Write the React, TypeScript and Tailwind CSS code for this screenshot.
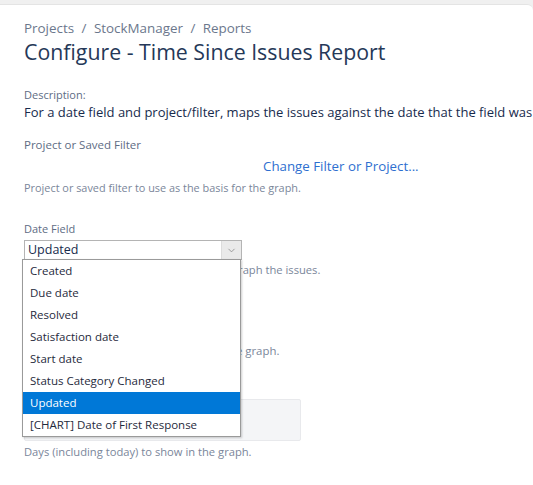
import { ChevronDown } from 'lucide-react';

const dateFields = [
  'Created',
  'Due date',
  'Resolved',
  'Satisfaction date',
  'Start date',
  'Status Category Changed',
  'Updated',
  '[CHART] Date of First Response',
];

export default function App() {
  const selected = 'Updated';

  return (
    <div className="h-[485px] w-[533px] overflow-hidden bg-[#f0f0f0] pt-[4px] font-['Open_Sans',sans-serif]">
      <div className="h-full rounded-tr-[6px] border-t border-[#e4e4e4] bg-white pl-[24px] pt-[14px]">
        {/* Header */}
        <div className="whitespace-nowrap text-[13.4px] leading-[18px] text-[#6b778c]">
          Projects <span className="mx-[4px]">/</span> StockManager <span className="mx-[4px]">/</span> Reports
        </div>
        <h1 className="mt-[1px] whitespace-nowrap text-[21.3px] leading-[28px] text-[#253858]">
          Configure - Time Since Issues Report
        </h1>

        <div className="mt-[22px] text-[11px] leading-[14px] text-[#5e6c84]">Description:</div>
        <p className="mt-[2px] whitespace-nowrap text-[13px] leading-[16px] text-[#172b4d]">
          For a date field and project/filter, maps the issues against the date that the field was set.
        </p>

        {/* Project or Saved Filter */}
        <div className="mt-[18px] text-[11.5px] leading-[14px] text-[#5e6c84]">Project or Saved Filter</div>
        <div className="mt-[5px] pl-[239px] text-[13.3px] leading-[18px] text-[#2e6fd0]">
          Change Filter or Project...
        </div>
        <div className="mt-[6px] whitespace-nowrap text-[10.9px] leading-[14px] text-[#7a869a]">
          Project or saved filter to use as the basis for the graph.
        </div>

        {/* Date Field */}
        <div className="mt-[27px] text-[11px] leading-[14px] text-[#5e6c84]">Date Field</div>
        <div className="relative mt-[4px] w-[218px]">
          <div className="flex h-[20px] items-center border border-[#b4b4b4] bg-white">
            <span className="flex-1 pl-[3px] text-[12.5px] leading-[16px] text-[#172b4d]">{selected}</span>
            <span className="flex h-full w-[20px] items-center justify-center border-l border-[#dcdcdc] bg-[#eaeaea]">
              <ChevronDown className="h-[11px] w-[11px] text-[#888]" strokeWidth={1.75} />
            </span>
          </div>

          {/* Open dropdown */}
          <div className="absolute left-[-2px] top-[19px] z-10 w-[219px] border border-[#9a9a9a] bg-white shadow-[1px_1px_2px_rgba(0,0,0,0.2)]">
            {dateFields.map((f) => (
              <div
                key={f}
                className={
                  f === selected
                    ? 'h-[22px] bg-[#0078d7] pl-[7px] text-[11.5px] leading-[22px] text-white'
                    : 'h-[22px] pl-[7px] text-[11.5px] leading-[22px] text-[#1f2a3c]'
                }
              >
                {f}
              </div>
            ))}
          </div>
        </div>
        <div className="mt-[3px] whitespace-nowrap text-[11.2px] leading-[14px] text-[#7a869a]">
          Date field to use to determine where to graph the issues.
        </div>

        {/* Period */}
        <div className="mt-[26px] text-[11px] leading-[14px] text-[#5e6c84]">Period</div>
        <div className="mt-[4px] h-[20px] w-[200px] border border-[#b4b4b4]" />
        <div className="mt-[3px] whitespace-nowrap text-[11.4px] leading-[14px] text-[#7a869a]">
          The length of periods represented on the graph.
        </div>

        {/* Days Previously */}
        <div className="mt-[25px] text-[11px] leading-[14px] text-[#5e6c84]">Days Previously</div>
        <div className="mt-[2px] h-[42px] w-[277px] rounded-[2px] border border-[#e8e9ec] bg-[#f4f5f7]" />
        <div className="mt-[4px] whitespace-nowrap text-[11.2px] leading-[14px] text-[#7a869a]">
          Days (including today) to show in the graph.
        </div>
      </div>
    </div>
  );
}
